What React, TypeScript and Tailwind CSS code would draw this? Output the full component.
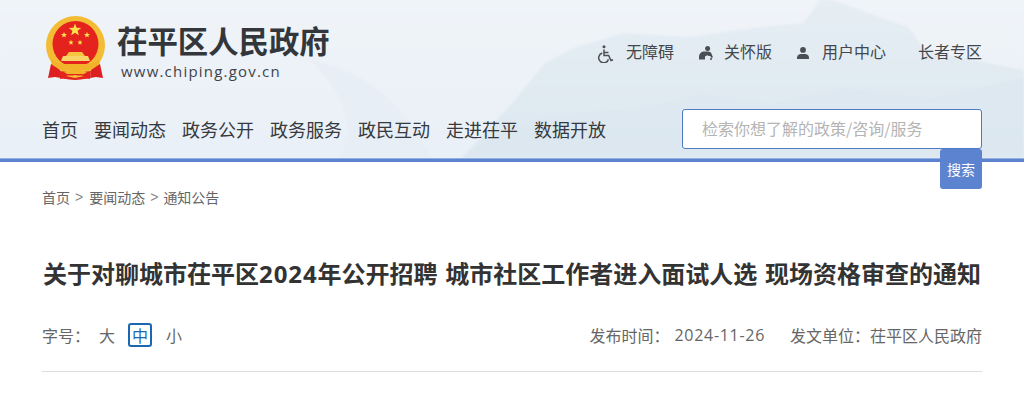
const cjk = { fontFamily: '"Noto Sans CJK SC", "Liberation Sans", sans-serif' };
const latin = { fontFamily: '"Open Sans", "Noto Sans CJK SC", sans-serif' };

function Star({ x, y, r }: { x: number; y: number; r: number }) {
  const pts = Array.from({ length: 10 }, (_, i) => {
    const a = (Math.PI / 5) * i - Math.PI / 2;
    const d = i % 2 ? r * 0.42 : r;
    return `${(x + d * Math.cos(a)).toFixed(2)},${(y + d * Math.sin(a)).toFixed(2)}`;
  }).join(' ');
  return <polygon points={pts} fill="#fbe04f" />;
}

function Emblem() {
  return (
    <svg width="62" height="66" viewBox="0 0 62 66">
      <circle cx="30.5" cy="30.5" r="29.5" fill="#f2bd34" />
      <circle cx="30.5" cy="29" r="23" fill="#e4231e" />
      <Star x={30} y={15} r={6.5} />
      <Star x={19} y={20} r={3.2} />
      <Star x={42} y={20} r={3.2} />
      <Star x={26} y={27.5} r={2.8} />
      <Star x={35} y={27.5} r={2.8} />
      {/* gate */}
      <path d="M24 37h13l3 4H21z" fill="#f6c83f" />
      <path d="M18 41h25l2 5H16z" fill="#f8d568" />
      {/* lower band */}
      <path d="M7 44c6 6 14 5 23 5s18 1 24-5l1 6c-6 6-15 5-25 5S12 56 6 50z" fill="#f2b32a" />
      {/* ribbons */}
      <path d="M6 49l9 6 1 8-6-1-7 1z" fill="#dd1f22" />
      <path d="M55 49l-9 6-1 8 6-1 7 1z" fill="#dd1f22" />
      <path d="M15 56c5 1 10 1 15 1s11 0 16-1l-1 8c-5-1-10 1-15 1s-10-2-15-1z" fill="#e4231e" />
      <path d="M19 57l5-1 3-3 3 2 4-2 3 3 5 1-3 2H22z" fill="#f2b32a" />
      <path d="M21 61c3-1 6 0 9-1 3 1 6 0 9 1l-9 2z" fill="#f5c338" />
    </svg>
  );
}

function WheelIcon() {
  return (
    <svg width="16" height="18" viewBox="0 0 16 18" fill="none" stroke="#4b4f55" strokeWidth="1.5">
      <circle cx="6" cy="1.8" r="1.5" fill="#4b4f55" stroke="none" />
      <path d="M6 4.5v6h4.6l2.4 5 2-.8" />
      <path d="M6 7.5h4.5" />
      <path d="M4.2 8a5 5 0 1 0 6.3 6.2" />
    </svg>
  );
}

function ElderIcon() {
  return (
    <svg width="14" height="14" viewBox="0 0 14 14" fill="#4b4f55">
      <circle cx="8.6" cy="2.6" r="2.5" />
      <path d="M0 13.5V11c0-3 2-5.6 5-5.6h4.4c1.3 0 2.3.7 2.9 1.9L14 11.6l-2 .2-.6-1.8h-1.6l-1.6-.8-2.2 1.3v3z" />
      <circle cx="12" cy="13" r="1" />
    </svg>
  );
}

function UserIcon() {
  return (
    <svg width="12" height="12" viewBox="0 0 12 12" fill="#4b4f55">
      <circle cx="6" cy="2.9" r="2.9" />
      <path d="M0 12v-1.6C0 8.4 2 7 4 7h4c2 0 4 1.4 4 3.4V12z" />
    </svg>
  );
}

export default function App() {
  return (
    <div className="bg-white h-[400px] overflow-hidden" style={cjk}>
      <header className="relative">
        <div className="relative h-[158px] bg-[#edf2f8] overflow-hidden">
          <svg className="absolute inset-0 blur-[1px]" width="1024" height="158" viewBox="0 0 1024 158">
            <defs>
              <linearGradient id="sky" x1="0" y1="0" x2="0" y2="1">
                <stop offset="0" stopColor="#f0f4f9" />
                <stop offset="1" stopColor="#e9f0f7" />
              </linearGradient>
              <linearGradient id="hill" x1="0" y1="0" x2="0" y2="1">
                <stop offset="0" stopColor="#e6eef4" />
                <stop offset="1" stopColor="#dde8f0" />
              </linearGradient>
            </defs>
            <rect width="1024" height="158" fill="url(#sky)" />
            <path d="M310 60c30 6 60 20 80 40 16 16 30 38 42 58H340c20-30 0-70-30-98z" fill="#e7eef5" />
            <path d="M820 0l-17 23-44 4-70 10-65-4-48 14-31 16-30 37-53 58h562V70l-51-10-48-10-17-23-75-27z" fill="url(#hill)" />
            <path d="M462 158c30-24 60-38 100-44l80-6 60-14 70 10 70-16 90 10 92-20v80z" fill="#dbe7ef" opacity="0.7" />
          </svg>
          <div className="relative h-full px-[42px] flex flex-col">
            <div className="flex items-start justify-between h-[109px]">
              <div className="flex items-start pt-[15px]">
                <div className="ml-[3px]">
                  <Emblem />
                </div>
                <div className="ml-[10px] pt-[5px]">
                  <div className="text-[30.4px] leading-[40px] font-bold text-[#33373b]">茌平区人民政府</div>
                  <div className="mt-[1px] ml-[4px] text-[15px] leading-[20px] tracking-[1.2px] text-[#3f4449]" style={latin}>
                    www.chiping.gov.cn
                  </div>
                </div>
              </div>
              <div className="flex items-start pt-[40px] text-[16px] leading-[22px] text-[#44484c]">
                <span className="mt-[5px]"><WheelIcon /></span>
                <span className="ml-[12px]">无障碍</span>
                <span className="ml-[25px] mt-[6px]"><ElderIcon /></span>
                <span className="ml-[11px]">关怀版</span>
                <span className="ml-[25px] mt-[7px]"><UserIcon /></span>
                <span className="ml-[13px]">用户中心</span>
                <span className="ml-[32px]">长者专区</span>
              </div>
            </div>
            <div className="flex items-start justify-between">
              <nav className="flex gap-[16px] pt-[6px] text-[18px] leading-[28px] text-[#36393d]">
                <a>首页</a>
                <a>要闻动态</a>
                <a>政务公开</a>
                <a>政务服务</a>
                <a>政民互动</a>
                <a>走进茌平</a>
                <a>数据开放</a>
              </nav>
              <div className="w-[300px] h-[40px] bg-white border border-[#4f7cc7] rounded-[3px] pl-[19px] text-[16px] leading-[37px] text-[#b4b4b4]">
                检索你想了解的政策/咨询/服务
              </div>
            </div>
          </div>
        </div>
        <div className="h-px bg-[#8fb0e0]" />
        <div className="h-[3px] bg-[#5b83cf]" />
        <button className="absolute right-[42px] top-[149px] w-[42px] h-[40px] bg-[#5b83cf] rounded-[3px] text-white text-[14px] leading-[40px]">
          搜索
        </button>
      </header>
      <main className="px-[42px]">
        <div className="flex items-center pt-[25px] text-[14px] leading-[20px] text-[#666666]">
          <span>首页</span>
          <span className="ml-[5px] mr-[6px] text-[#888888]" style={{ fontFamily: '"Liberation Sans", sans-serif' }}>&gt;</span>
          <span>要闻动态</span>
          <span className="mx-[5px] text-[#888888]" style={{ fontFamily: '"Liberation Sans", sans-serif' }}>&gt;</span>
          <span>通知公告</span>
        </div>
        <h1 className="mt-[49px] text-[24px] leading-[36px] font-bold text-[#333333] text-center whitespace-nowrap [word-spacing:1.5px]" style={latin}>
          关于对聊城市茌平区<span className="tracking-[0.9px]">2024</span>年公开招聘 城市社区工作者进入面试人选 现场资格审查的通知
        </h1>
        <div className="mt-[31px] pb-[24px] border-b border-[#dddddd] flex items-center justify-between text-[16px] leading-[24px] text-[#666666]">
          <div className="flex items-center">
            <span>字号：</span>
            <span className="ml-[9px]">大</span>
            <span className="ml-[13px] w-[24px] h-[24px] flex items-center justify-center border-2 border-[#1c68b0] rounded-[3px] text-[#1c68b0]">中</span>
            <span className="ml-[14px]">小</span>
          </div>
          <div className="flex items-center">
            <span>发布时间：</span>
            <span className="ml-[5px] tracking-[0.7px]" style={latin}>2024-11-26</span>
            <span className="ml-[25px]">发文单位：茌平区人民政府</span>
          </div>
        </div>
      </main>
    </div>
  );
}
